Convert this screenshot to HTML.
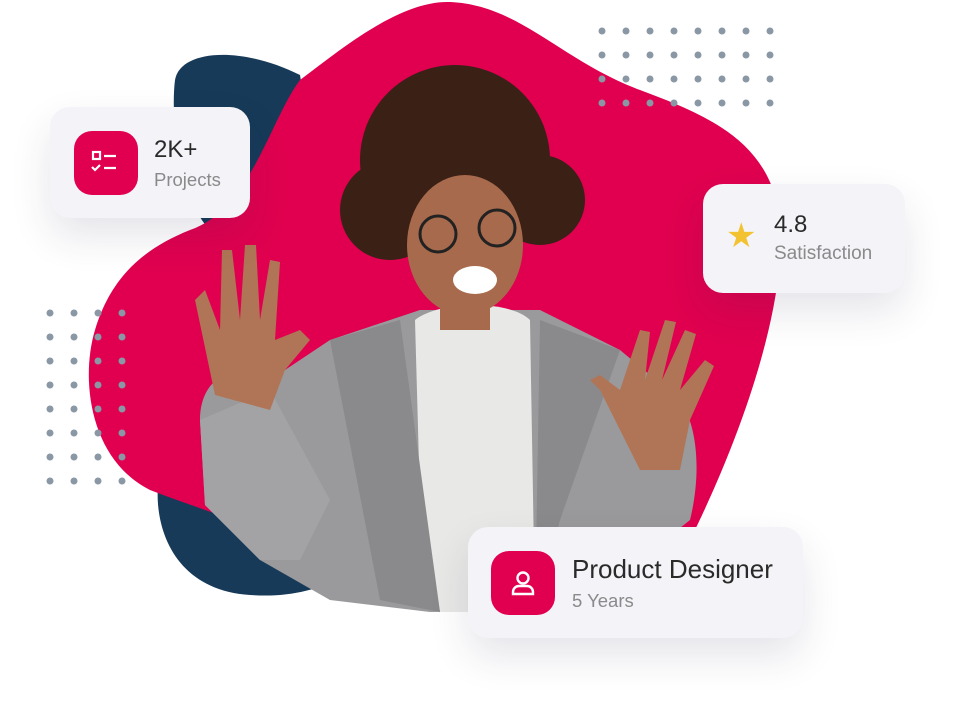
<!DOCTYPE html>
<html><head><style>
html,body{margin:0;padding:0;background:#fff;}
body{width:955px;height:713px;position:relative;overflow:hidden;font-family:"Liberation Sans",sans-serif;}
.card{position:absolute;background:#f3f3f8;border-radius:20px;box-shadow:0 18px 40px rgba(40,40,80,0.12);}
.ic{position:absolute;background:#e0004f;border-radius:18px;}
.t{position:absolute;color:#2a2a2a;}
.s{position:absolute;color:#8a8a8a;}
</style></head><body>
<svg width="955" height="713" style="position:absolute;left:0;top:0">
<path d="M175 80 C180 50 240 45 300 75 L320 200 L210 230 C180 200 170 120 175 80Z" fill="#173a59"/>
<path d="M160 470 C150 520 170 590 250 595 C320 600 360 570 380 540 L300 470Z" fill="#173a59"/>
<path d="M300 80 C340 50 400 0 450 2 C520 5 560 60 640 90 C720 120 790 150 780 260 C772 360 720 480 690 540 L460 610 L300 560 C250 520 200 510 150 490 C90 460 80 380 95 330 C110 280 140 250 190 230 C250 210 270 120 300 80Z" fill="#e0004f"/>
<g fill="#8a97a5">
<g id="r1"><circle cx="602" cy="31" r="3.5"/><circle cx="626" cy="31" r="3.5"/><circle cx="650" cy="31" r="3.5"/><circle cx="674" cy="31" r="3.5"/><circle cx="698" cy="31" r="3.5"/><circle cx="722" cy="31" r="3.5"/><circle cx="746" cy="31" r="3.5"/><circle cx="770" cy="31" r="3.5"/></g>
<use href="#r1" y="24"/><use href="#r1" y="48"/><use href="#r1" y="72"/>
<g id="c1"><circle cx="50" cy="313" r="3.5"/><circle cx="74" cy="313" r="3.5"/><circle cx="98" cy="313" r="3.5"/><circle cx="122" cy="313" r="3.5"/></g>
<use href="#c1" y="24"/><use href="#c1" y="48"/><use href="#c1" y="72"/><use href="#c1" y="96"/><use href="#c1" y="120"/><use href="#c1" y="144"/><use href="#c1" y="168"/>
</g>
<path d="M200 420 C200 380 230 360 270 380 L330 340 L420 310 L540 310 L620 350 L680 400 C700 430 700 480 690 520 L640 560 L600 610 L430 612 L330 600 L260 560 L205 505Z" fill="#9a9a9c"/>
<path d="M415 320 C440 300 510 300 530 320 L535 612 L440 612 L420 500Z" fill="#e8e8e6"/>
<path d="M330 340 L400 320 L440 612 L380 600Z" fill="#8a8a8c"/>
<path d="M540 320 L620 350 L560 520 L535 612Z" fill="#8a8a8c"/>
<path d="M200 420 L270 390 L330 500 L300 560 L260 560 L205 505Z" fill="#a3a3a5"/>
<path d="M215 395 L195 300 L205 290 L220 330 L222 250 L232 250 L240 320 L245 245 L256 245 L260 320 L270 260 L280 262 L275 340 L300 330 L310 340 L285 370 L270 410Z" fill="#b07556"/>
<path d="M640 470 L600 390 L590 380 L600 375 L620 390 L640 330 L650 332 L645 380 L665 320 L676 322 L662 380 L685 330 L696 334 L680 390 L705 360 L714 366 L690 420 L680 470Z" fill="#b07556"/>
<circle cx="455" cy="160" r="95" fill="#3b2016"/>
<circle cx="390" cy="210" r="50" fill="#3b2016"/>
<circle cx="540" cy="200" r="45" fill="#3b2016"/>
<ellipse cx="465" cy="245" rx="58" ry="70" fill="#a86a4c"/>
<rect x="440" y="290" width="50" height="40" fill="#a86a4c"/>
<ellipse cx="475" cy="280" rx="22" ry="14" fill="#fff"/>
<circle cx="438" cy="234" r="18" fill="none" stroke="#222" stroke-width="3"/>
<circle cx="497" cy="228" r="18" fill="none" stroke="#222" stroke-width="3"/>
</svg>

<div class="card" style="left:50px;top:107px;width:200px;height:111px">
 <div class="ic" style="left:24px;top:24px;width:64px;height:64px">
  <svg width="64" height="64" viewBox="0 0 64 64" fill="none" stroke="#fff" stroke-width="2.2">
   <rect x="19" y="21" width="7" height="7"/><path d="M30 25H42M30 37H42M18 36l3 3 5-5"/></svg></div>
 <div class="t" style="left:104px;top:29px;font-size:24px">2K+</div>
 <div class="s" style="left:104px;top:62px;font-size:18.5px">Projects</div>
</div>

<div class="card" style="left:703px;top:184px;width:202px;height:109px">
 <div style="position:absolute;left:23px;top:32px;font-size:34px;color:#f3c230">★</div>
 <div class="t" style="left:71px;top:27px;font-size:24px">4.8</div>
 <div class="s" style="left:71px;top:59px;font-size:19px">Satisfaction</div>
</div>

<div class="card" style="left:468px;top:527px;width:335px;height:111px">
 <div class="ic" style="left:23px;top:24px;width:64px;height:64px">
  <svg width="64" height="64" viewBox="0 0 64 64" fill="none" stroke="#fff" stroke-width="2.4">
   <circle cx="32" cy="27" r="5.5"/><path d="M22 43v-2a6 6 0 0 1 6-6h8a6 6 0 0 1 6 6v2z"/></svg></div>
 <div class="t" style="left:104px;top:27px;font-size:26px">Product Designer</div>
 <div class="s" style="left:104px;top:63px;font-size:18.5px">5 Years</div>
</div>
</body></html>
